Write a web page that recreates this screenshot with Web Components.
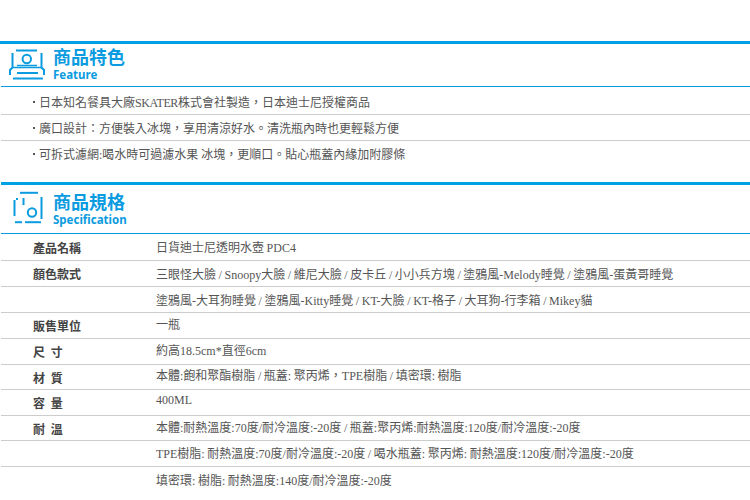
<!DOCTYPE html>
<html lang="zh-Hant">
<head>
<meta charset="utf-8">
<style>
  html, body { margin: 0; padding: 0; background: #fff; }
  body { width: 750px; height: 500px; overflow: hidden; font-family: "Liberation Serif", "Noto Sans CJK TC", serif; }
</style>
</head>
<body>
<product-page>
  <section-head title="商品特色" sub="Feature" icon="feature" style="--bar-top:41px;--bar-left:0;--head:42px;--lift:4px;--sub-gap:-1px"></section-head>
  <feature-row style="--h:28px;--top:2px">日本知名餐具大廠<span style="letter-spacing:-.4px">SKATER</span>株式會社製造，日本迪士尼授權商品</feature-row>
  <feature-row>廣口設計：方便裝入冰塊，享用清涼好水。清洗瓶內時也更輕鬆方便</feature-row>
  <feature-row last>可拆式濾網:喝水時可過濾水果 冰塊，更順口。貼心瓶蓋內緣加附膠條</feature-row>
  <section-head title="商品規格" sub="Specification" icon="spec" style="--bar-top:15px;--bar-left:1px;--head:48px;--lift:3px;--sub-gap:-1px"></section-head>
  <spec-row label="產品名稱" style="--h:27px">日貨迪士尼透明水壺 PDC4</spec-row>
  <spec-row label="顏色款式">三眼怪大臉 / Snoopy大臉 / 維尼大臉 / 皮卡丘 / 小小兵方塊 / 塗鴉風-Melody睡覺 / 塗鴉風-蛋黃哥睡覺</spec-row>
  <spec-row>塗鴉風-大耳狗睡覺 / 塗鴉風-Kitty睡覺 / KT-大臉 / KT-格子 / 大耳狗-行李箱 / Mikey貓</spec-row>
  <spec-row label="販售單位" style="--value-lift:4px">一瓶</spec-row>
  <spec-row label="尺 寸" style="--value-lift:4px">約高18.5cm*直徑6cm</spec-row>
  <spec-row label="材 質" style="--h:25px;--value-lift:4px">本體:飽和聚酯樹脂 / 瓶蓋: 聚丙烯，TPE樹脂 / 填密環: 樹脂</spec-row>
  <spec-row label="容 量" style="--value-lift:4px">400ML</spec-row>
  <spec-row label="耐 溫" style="--h:25px;--value-lift:3px">本體:耐熱溫度:70度/耐冷溫度:-20度 / 瓶蓋:聚丙烯:耐熱溫度:120度/耐冷溫度:-20度</spec-row>
  <spec-row style="--value-lift:2px">TPE樹脂: 耐熱溫度:70度/耐冷溫度:-20度 / 喝水瓶蓋: 聚丙烯: 耐熱溫度:120度/耐冷溫度:-20度</spec-row>
  <spec-row last>填密環: 樹脂: 耐熱溫度:140度/耐冷溫度:-20度</spec-row>
</product-page>
<script>
// viewBox values follow the page coordinates of the reference icons
const ICONS = {
  feature: `<svg width="38" height="33" viewBox="8 48 38 33" style="margin-top:4px" fill="none" stroke="#0a9be0" stroke-width="2">
    <path d="M16 50.500H37"/>
    <path d="M12.500 53V67.500L10 70V75"/><path d="M41.500 53V67.500L44 70V75"/>
    <circle cx="26.800" cy="59" r="4.200"/>
    <path d="M17 65.500H37" stroke-width="1.500"/><path d="M12.500 67.500H41.500" stroke-width="1.500"/>
    <path d="M17 73H38"/><path d="M13 78.500H43"/></svg>`,
  spec: `<svg width="38" height="36" viewBox="8 190 38 36" style="margin-top:5px" fill="none" stroke="#0a9be0" stroke-width="2">
    <path d="M20 192.800H38"/><path d="M41.500 197V219"/>
    <path d="M14.500 200V216"/><path d="M17 198V200"/><path d="M23.500 198V205"/>
    <circle cx="32" cy="212.500" r="4.200"/>
    <path d="M15 222.200H22"/><path d="M25 222.200H41"/></svg>`
};

class ProductPage extends HTMLElement {
  constructor() {
    super();
    this.attachShadow({ mode: "open" }).innerHTML = `
      <style>:host { display: flex; flex-direction: column; width: 750px; }</style>
      <slot></slot>`;
  }
}

class SectionHead extends HTMLElement {
  constructor() {
    super();
    this.attachShadow({ mode: "open" });
  }

  connectedCallback() {
    this.shadowRoot.innerHTML = `
      <style>
        :host { display: block; padding-top: var(--bar-top); }
        .bar { height: 3px; margin-left: var(--bar-left); background: #00a0e4; }
        .head {
          display: flex; height: var(--head);
          margin-left: 1px; border-bottom: 1px solid #0a9be0;
        }
        .icon { flex: none; width: 52px; padding-left: 7px; box-sizing: border-box; }
        svg { display: block; }
        .text {
          display: flex; flex-direction: column; justify-content: center; padding-bottom: var(--lift);
          color: #0a9be0; font-family: "Noto Sans CJK TC", sans-serif; font-weight: 700;
        }
        .title { font-size: 18px; line-height: 24px; }
        .sub { font-size: 11.5px; line-height: 15px; margin-top: var(--sub-gap); font-family: "Noto Sans", sans-serif; }
      </style>
      <div class="bar"></div>
      <div class="head">
        <div class="icon">${ICONS[this.getAttribute("icon")]}</div>
        <div class="text">
          <span class="title">${this.getAttribute("title")}</span>
          <span class="sub">${this.getAttribute("sub")}</span>
        </div>
      </div>`;
  }
}

class FeatureRow extends HTMLElement {
  constructor() {
    super();
    this.attachShadow({ mode: "open" }).innerHTML = `
      <style>
        :host {
          display: flex; align-items: center; height: var(--h, 26px); margin-left: 1px;
          border-bottom: 1px solid #ccc; box-sizing: border-box;
          color: #555; font-size: 12px; padding: var(--top, 0) 0 0 32px; gap: 4px;
        }
        :host([last]) { border-bottom: 0; }
        .dot { width: 2px; height: 2px; background: #555; flex: none; }
      </style>
      <span class="dot"></span><div><slot></slot></div>`;
  }
}

class SpecRow extends HTMLElement {
  constructor() {
    super();
    this.attachShadow({ mode: "open" });
  }

  connectedCallback() {
    this.shadowRoot.innerHTML = `
      <style>
        :host {
          display: grid; grid-template-columns: 155px 1fr; align-items: center;
          height: var(--h, 26px); margin-left: 1px; border-bottom: 1px solid #ccc; box-sizing: border-box;
          color: #555; font-size: 12px; word-spacing: -0.4px;
        }
        :host([last]) { border-bottom: 0; }
        .label { padding-left: 32px; font-weight: 700; color: #444; font-family: "Noto Sans CJK TC", sans-serif; word-spacing: 3px; }
        .value { padding-bottom: var(--value-lift, 0); }
      </style>
      <div class="label">${this.getAttribute("label") ?? ""}</div>
      <div class="value"><slot></slot></div>`;
  }
}

customElements.define("product-page", ProductPage);
customElements.define("section-head", SectionHead);
customElements.define("feature-row", FeatureRow);
customElements.define("spec-row", SpecRow);
</script>
</body>
</html>
